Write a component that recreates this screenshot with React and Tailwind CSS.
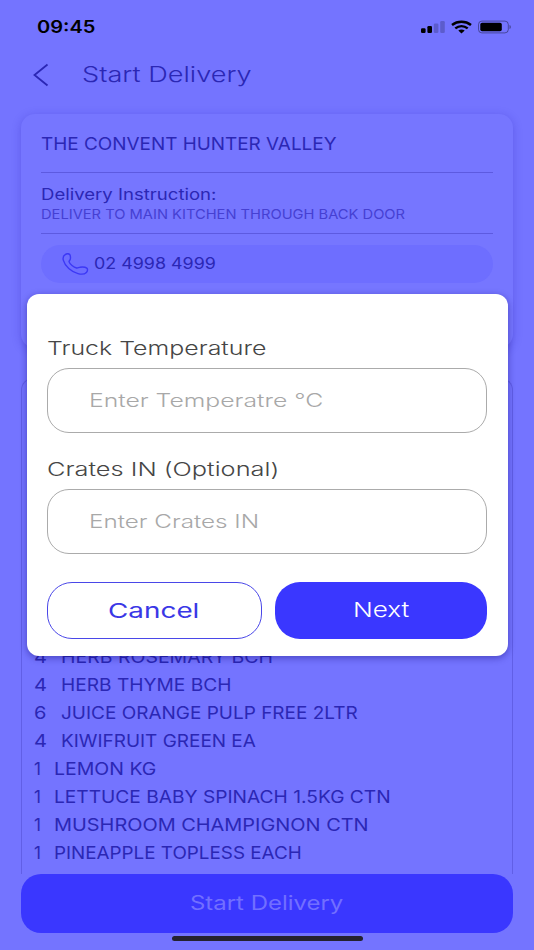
import React, { useLayoutEffect, useRef, useState } from 'react';

const items = [
  { qty: 4, name: 'HERB ROSEMARY BCH', width: 212 },
  { qty: 4, name: 'HERB THYME BCH', width: 170 },
  { qty: 6, name: 'JUICE ORANGE PULP FREE 2LTR', width: 297 },
  { qty: 4, name: 'KIWIFRUIT GREEN EA', width: 195 },
  { qty: 1, name: 'LEMON KG', width: 102 },
  { qty: 1, name: 'LETTUCE BABY SPINACH 1.5KG CTN', width: 337 },
  { qty: 1, name: 'MUSHROOM CHAMPIGNON CTN', width: 314 },
  { qty: 1, name: 'PINEAPPLE TOPLESS EACH', width: 248 },
];

// Wide lettering: stretches one line of text to the given width
const WideText = ({ width, className = '', children }) => {
  const ref = useRef(null);
  const [scale, setScale] = useState(1);

  useLayoutEffect(() => {
    setScale(width / ref.current.offsetWidth);
  }, [width]);

  return (
    <span className={`block shrink-0 whitespace-nowrap text-left ${className}`} style={{ width }}>
      <span ref={ref} className="inline-block origin-left" style={{ transform: `scaleX(${scale})` }}>
        {children}
      </span>
    </span>
  );
};

const StatusBar = () => (
  <div className="flex h-[52px] items-center justify-between pl-[37px] pr-[22px] text-black">
    <WideText width={59} className="pt-[3px] text-[17px] font-semibold">09:45</WideText>
    <svg width="92" height="14" viewBox="0 0 92 14" className="mt-px shrink-0">
      <rect x="1" y="8.3" width="4.6" height="4.7" rx="1.2" />
      <rect x="7.4" y="6" width="4.6" height="7" rx="1.2" />
      <rect x="13.8" y="3.5" width="4.6" height="9.5" rx="1.2" fillOpacity="0.2" />
      <rect x="20.2" y="1" width="4.6" height="12" rx="1.2" fillOpacity="0.2" />
      <g fill="none" stroke="#000" strokeWidth="2.5">
        <path d="M32 4.9C37.5 0.7 45.5 0.7 51 4.9" />
        <path d="M35.3 8.4C39 5.4 44 5.4 47.7 8.4" />
      </g>
      <path d="M38.3 10.6C40.2 9.1 42.8 9.1 44.7 10.6L41.5 13.4Z" />
      <rect x="58.5" y="1.1" width="29.8" height="11.8" rx="3.4" fill="none" stroke="#000" strokeOpacity="0.38" />
      <rect x="60.3" y="2.7" width="21.5" height="8.6" rx="1.8" />
      <path d="M89.5 5V9C91.3 8.5 91.3 5.5 89.5 5Z" fillOpacity="0.4" />
    </svg>
  </div>
);

const DeliveryCard = () => (
  <div className="mx-[21px] mt-[17px] h-[234px] rounded-[14px] bg-[#7676ff] px-5 text-[#2b27b4] shadow-[0_2px_10px_rgba(40,30,180,0.28)]">
    <div className="flex h-[59px] items-center border-b border-[#5d5ae0] pt-[2px]">
      <WideText width={295} className="text-[17.5px]">THE CONVENT HUNTER VALLEY</WideText>
    </div>
    <div className="h-[61px] border-b border-[#5d5ae0] pt-[11px]">
      <WideText width={176} className="text-[15.5px] leading-[21px]">Delivery Instruction:</WideText>
      <WideText width={364} className="text-[13.4px] leading-[19px] text-[#4540d2]">
        DELIVER TO MAIN KITCHEN THROUGH BACK DOOR
      </WideText>
    </div>
    <div className="mt-[11px] flex h-[38px] items-center rounded-[19px] bg-[#6e6eff] pl-[21px]">
      <svg width="27" height="22" viewBox="0 0 27 22" fill="none" stroke="#3c38f5" strokeWidth="1.4" strokeLinejoin="round">
        <path d="M3.2 1.6C4.5 0.7 6.6 0.5 7.7 1.6C8.5 2.4 8.7 5.2 8.2 6.5C7.8 7.5 6.8 7.9 7.1 8.9C7.8 11.2 11.7 14.3 14.6 15C16 15.3 16.5 14.3 17.9 14.2C20 13.9 23.6 14.2 24.8 15.1C26 16.1 25.6 18.2 24.4 19.4C22.6 21.2 19 21.4 16 20.6C9.5 18.9 2.8 13.1 1.3 7.2C0.7 4.7 1.4 2.7 3.2 1.6Z" />
      </svg>
      <WideText width={122} className="ml-[5px] text-[15.7px]">02 4998 4999</WideText>
    </div>
  </div>
);

const ItemList = () => (
  <div className="mx-[21px] mt-[30px] flex h-[496px] flex-col justify-end rounded-t-[12px] border border-b-0 border-[#615fe6] pb-[6px] pl-3 text-[17px] text-[#2b27b4]">
    {items.map((item) => (
      <div key={item.name} className="flex h-[28.1px] items-center">
        <WideText width={item.qty === 1 ? 7 : 13} className={item.qty === 1 ? 'mr-[13px]' : 'mr-[14px]'}>{item.qty}</WideText>
        <WideText width={item.width}>{item.name}</WideText>
      </div>
    ))}
  </div>
);

const Field = ({ label, labelWidth, placeholder, placeholderWidth }) => (
  <div>
    <WideText width={labelWidth} className="text-[18.7px] font-[350] leading-[28px] text-[#464646]">{label}</WideText>
    <div className="mt-[5px] flex h-[65px] items-center rounded-[22px] border border-[#ababab] pl-[41px] text-[#a8a8a8]">
      <WideText width={placeholderWidth} className="text-[18.4px] font-[350]">{placeholder}</WideText>
    </div>
  </div>
);

const TruckModal = () => (
  <div className="absolute left-[26.5px] top-[294px] h-[362px] w-[481px] rounded-[12px] bg-white px-[20.5px] pt-[41px] shadow-[0_2px_7px_rgba(20,10,120,0.45)]">
    <Field label="Truck Temperature" labelWidth={220} placeholder="Enter Temperatre °C" placeholderWidth={234} />
    <div className="mt-[23px]">
      <Field label="Crates IN (Optional)" labelWidth={232} placeholder="Enter Crates IN" placeholderWidth={170} />
    </div>
    <div className="mt-[28px] flex h-[57px] gap-[13px]">
      <button className="flex w-[215px] items-center justify-center rounded-[25px] border border-[#4a47e8] pr-[2px] pt-[2px] text-[#3a37e6]">
        <WideText width={92} className="text-[20.6px] font-[370]">Cancel</WideText>
      </button>
      <button className="flex w-[212px] items-center justify-center rounded-[25px] bg-[#3a37ff] text-white">
        <WideText width={57} className="text-[20.6px] font-[350]">Next</WideText>
      </button>
    </div>
  </div>
);

const App = () => (
  <div className="relative h-[950px] w-[534px] overflow-hidden bg-[#7474ff] font-['Inter',sans-serif]">
    <StatusBar />
    <div className="flex h-[45px] items-center pl-[33px] text-[#2b27b4]">
      <svg width="16" height="24" viewBox="0 0 16 24" fill="none" stroke="currentColor" strokeWidth="1.8">
        <path d="M14.5 1.5L1.5 12L14.5 22.5" />
      </svg>
      <WideText width={170} className="ml-[33px] text-[21.4px] font-[350]">Start Delivery</WideText>
    </div>
    <DeliveryCard />
    <ItemList />
    <button className="mx-[21px] flex h-[59px] w-[492px] items-center justify-center rounded-[20px] bg-[#3a37ff] pr-[2px] text-[#726fff]">
      <WideText width={153} className="text-[19.4px] font-[370]">Start Delivery</WideText>
    </button>
    <div className="mx-auto mt-[3px] h-[5px] w-[191px] rounded-full bg-[#24222e]" />
    <TruckModal />
  </div>
);

export default App;
